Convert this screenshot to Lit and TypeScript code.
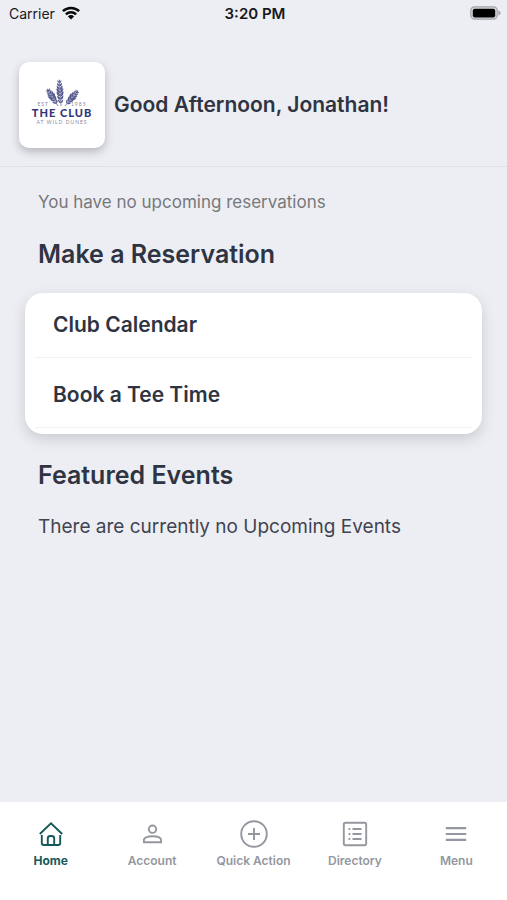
import { LitElement, html, svg, css } from "lit";
import { customElement, property } from "lit/decorators.js";

const leaves = (count: number, length: number) =>
  Array.from({ length: count }, (_, i) => {
    const y = -3 - (i * (length - 6)) / (count - 1);
    const s = 1.1 - Math.abs(i / (count - 1) - 0.4) * 0.8;
    return svg`
      <path d="M0 ${y} q${-3.4 * s} 0 ${-3.4 * s} ${-4.6 * s} q${3.2 * s} ${1 * s} ${3.4 * s} ${4.6 * s}z"></path>
      <path d="M0 ${y} q${3.4 * s} 0 ${3.4 * s} ${-4.6 * s} q${-3.2 * s} ${1 * s} ${-3.4 * s} ${4.6 * s}z"></path>`;
  });

const frond = (length: number) => svg`
  <path d="M0 0 V${-length + 3}" fill="none" stroke="#575b8e" stroke-width="0.7"></path>
  ${leaves(length > 22 ? 7 : 6, length)}
  <path d="M0 ${-length - 1} q1.6 2.4 0 5 q-1.6 -2.6 0 -5z"></path>`;

@customElement("club-logo")
export class ClubLogo extends LitElement {
  static styles = css`
    :host {
      display: flex;
      flex-direction: column;
      align-items: center;
      box-sizing: border-box;
      flex: none;
      width: 86px;
      height: 86px;
      padding-top: 16px;
      border-radius: 10px;
      background: #fff;
      box-shadow: 0 4px 8px rgba(60, 64, 72, 0.3);
      font-family: Lato, "Liberation Sans", sans-serif;
    }
    .crest {
      display: flex;
      align-items: flex-end;
      height: 29px;
    }
    .crest svg {
      display: block;
      margin: 0 -9px 0 -5px;
      fill: #575b8e;
    }
    .small {
      font-size: 5px;
      line-height: 6px;
      letter-spacing: 1px;
      color: #85879f;
    }
    .name {
      font-size: 11px;
      line-height: 12px;
      font-weight: 900;
      letter-spacing: 1px;
      white-space: nowrap;
      color: #34367a;
    }
  `;

  render() {
    return html`
      <div class="crest">
        <span class="small">EST</span>
        <svg width="36" height="29" viewBox="-17 -28 36 29" aria-hidden="true">
          <g transform="translate(-3 0) rotate(-32)">${frond(20)}</g>
          <g transform="translate(4 0) rotate(40)">${frond(20)}</g>
          <g transform="translate(0 0) rotate(-4)">${frond(26)}</g>
        </svg>
        <span class="small">1985</span>
      </div>
      <div class="name">THE CLUB</div>
      <div class="small">AT WILD DUNES</div>
    `;
  }
}

const icons = {
  home: svg`
    <path d="M2.8 14 L14 3.2 L25.2 14"></path>
    <path d="M4.8 15 V23 Q4.8 25 6.8 25 H21.2 Q23.2 25 23.2 23 V15"></path>
    <path d="M10.8 25 V18.5 Q10.8 16 13.2 16 H14.8 Q17.2 16 17.2 18.5 V25"></path>`,
  account: svg`
    <circle cx="14.5" cy="9.2" r="3.7"></circle>
    <path d="M5.9 22.2 V20.2 C5.9 17.4 10.3 16.2 14.5 16.2 S23.1 17.4 23.1 20.2 V22.2Z"></path>`,
  quick: svg`
    <circle cx="14" cy="14" r="12.8"></circle>
    <path d="M14 8 V20 M8 14 H20"></path>`,
  directory: svg`
    <rect x="2.8" y="2.8" width="22.4" height="22.4" rx="1.6"></rect>
    <path d="M11.5 9 H20.5 M11.5 14 H20.5 M11.5 19 H20.5 M7.5 9 H9.3 M7.5 14 H9.3 M7.5 19 H9.3"></path>`,
  menu: svg`<path d="M3.8 8.2 H24.2 M3.8 14 H24.2 M3.8 19.8 H24.2" stroke-width="2.2"></path>`,
};

@customElement("tab-link")
export class TabLink extends LitElement {
  @property() label = "";
  @property() icon: keyof typeof icons = "home";
  @property({ type: Boolean }) current = false;

  static styles = css`
    :host {
      flex: 1;
      min-width: 0;
    }
    .tab {
      display: flex;
      flex-direction: column;
      align-items: center;
      gap: 5px;
      color: #94979f;
      font-size: 12px;
      line-height: 16px;
      font-weight: 600;
      text-decoration: none;
      white-space: nowrap;
    }
    .current {
      color: #17595a;
      font-weight: 700;
    }
    svg {
      display: block;
      fill: none;
      stroke: currentColor;
      stroke-width: 1.9;
      stroke-linecap: butt;
    }
  `;

  render() {
    return html`
      <a class="tab ${this.current ? "current" : ""}" href="#${this.icon}">
        <svg width="28" height="28" viewBox="0 0 28 28" aria-hidden="true">${icons[this.icon]}</svg>
        <span>${this.label}</span>
      </a>
    `;
  }
}

@customElement("app-root")
export class AppRoot extends LitElement {
  static styles = css`
    :host {
      display: flex;
      flex-direction: column;
      min-height: 100vh;
      background: #edeef3;
      color: #2f3442;
      font-family: Inter, "Liberation Sans", sans-serif;
    }
    .status {
      display: grid;
      grid-template-columns: 1fr auto 1fr;
      align-items: center;
      height: 26px;
      padding: 0 6px 0 9px;
      font-size: 14px;
      color: #17181b;
    }
    .carrier {
      display: flex;
      align-items: center;
      gap: 7px;
    }
    .time {
      font-size: 15px;
      font-weight: 600;
    }
    .battery {
      justify-self: end;
    }
    .status svg {
      display: block;
    }
    .greeting {
      display: flex;
      align-items: center;
      gap: 9px;
      padding: 36px 19px 18px;
      border-bottom: 1px solid #dfe0e4;
    }
    h1,
    h2,
    p,
    ul {
      margin: 0;
      padding: 0;
    }
    h1 {
      font-size: 21px;
      line-height: 28px;
      font-weight: 600;
    }
    h2 {
      font-size: 25px;
      line-height: 34px;
      font-weight: 600;
    }
    main {
      flex: 1;
      padding: 24px 25px;
    }
    .text {
      padding: 0 13px;
    }
    .note {
      font-size: 17px;
      line-height: 22px;
      color: #77787c;
    }
    .make {
      margin-top: 24px;
    }
    .card {
      list-style: none;
      margin: 22px 0 24px;
      padding: 0 10px 6px;
      border-radius: 18px;
      background: #fff;
      box-shadow: 0 5px 14px rgba(60, 64, 72, 0.2);
    }
    .row {
      border-bottom: 1px solid #f1f1f3;
    }
    .row + .row {
      padding-top: 5px;
    }
    .item {
      display: block;
      width: 100%;
      padding: 0 18px;
      border: 0;
      background: none;
      color: inherit;
      font: 600 21px/64px Inter, "Liberation Sans", sans-serif;
      text-align: left;
    }
    .empty {
      margin-top: 22px;
      font-size: 19px;
      line-height: 26px;
      color: #3f4450;
    }
    nav {
      display: flex;
      padding: 18px 0 31px;
      background: #fff;
    }
  `;

  render() {
    return html`
      <div class="status">
        <span class="carrier">
          Carrier
          <svg width="18" height="14" viewBox="0 0 18 14" aria-label="Wi-Fi">
            <g fill="none" stroke="#08090a" stroke-width="2.5">
              <path d="M0.9 5.2 A11.6 11.6 0 0 1 17.1 5.2"></path>
              <path d="M3.9 8.4 A7.3 7.3 0 0 1 14.1 8.4"></path>
            </g>
            <path d="M5.9 10.4 A4.4 4.4 0 0 1 12.1 10.4 L9 13.6Z" fill="#08090a"></path>
          </svg>
        </span>
        <span class="time">3:20 PM</span>
        <svg class="battery" width="31" height="14" viewBox="0 0 31 14" aria-label="Battery full">
          <rect x="0.8" y="0.8" width="26.4" height="12.4" rx="3.6" fill="#d5d6d9" stroke="#a4a5a8" stroke-width="1.2"></rect>
          <rect x="2.8" y="2.8" width="22.4" height="8.6" rx="2" fill="#000"></rect>
          <path d="M28.4 4.6 Q30.6 5.4 30.6 7 T28.4 9.4Z" fill="#a4a5a8"></path>
        </svg>
      </div>
      <header class="greeting">
        <club-logo></club-logo>
        <h1>Good Afternoon, Jonathan!</h1>
      </header>
      <main>
        <p class="text note">You have no upcoming reservations</p>
        <h2 class="text make">Make a Reservation</h2>
        <ul class="card">
          <li class="row"><button class="item">Club Calendar</button></li>
          <li class="row"><button class="item">Book a Tee Time</button></li>
        </ul>
        <h2 class="text">Featured Events</h2>
        <p class="text empty">There are currently no Upcoming Events</p>
      </main>
      <nav>
        <tab-link icon="home" label="Home" current></tab-link>
        <tab-link icon="account" label="Account"></tab-link>
        <tab-link icon="quick" label="Quick Action"></tab-link>
        <tab-link icon="directory" label="Directory"></tab-link>
        <tab-link icon="menu" label="Menu"></tab-link>
      </nav>
    `;
  }
}
